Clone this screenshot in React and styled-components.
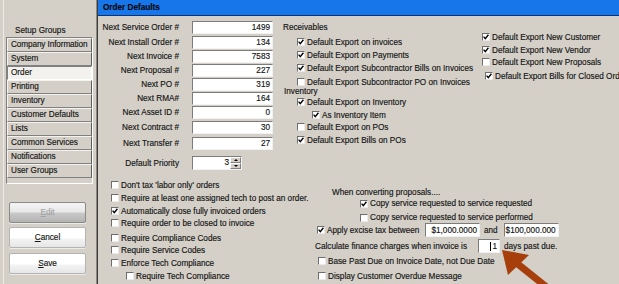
import React from "react";
import styled, { createGlobalStyle } from "styled-components";

const GlobalStyle = createGlobalStyle`
  html, body {
    margin: 0;
    padding: 0;
    background: #d4d0c8;
  }
  body {
    font-family: "Liberation Sans", Arial, sans-serif;
    font-size: 8.2px;
    color: #141414;
    -webkit-text-stroke: 0.15px #141414;
  }
`;

const Window = styled.div`
  position: relative;
  display: flex;
  width: 619px;
  height: 284px;
  overflow: hidden;
  background: #d4d0c8;
`;

/* ---------- left side ---------- */

const Sidebar = styled.aside`
  width: 94px;
  margin-left: 3px;
  flex-shrink: 0;
  display: flex;
  flex-direction: column;
  box-sizing: border-box;
  border-left: 1px solid #ecebe6;
  border-right: 1px solid #8c8880;
`;

const SidebarLabel = styled.div`
  margin-top: 26px;
  height: 10px;
  line-height: 10px;
  padding-left: 11px;
  white-space: nowrap;
`;

const GroupList = styled.div`
  width: 87px;
  margin: 1px 0 0 2px;
  box-sizing: border-box;
  padding-bottom: 5px;
  border: 1px solid;
  border-color: #808080 #fff #fff #808080;
`;

const GroupItem = styled.div`
  height: 14px;
  box-sizing: border-box;
  padding-left: 3px;
  line-height: 12px;
  white-space: nowrap;
  overflow: hidden;
  letter-spacing: ${(p) => (p.$tight ? "-0.1px" : "0")};
  background: ${(p) => (p.$selected ? "#f3f2ee" : "#d4d0c8")};
  border-top: 1px solid ${(p) => (p.$selected ? "#808080" : "#f4f3ef")};
  border-left: 1px solid ${(p) => (p.$selected ? "#808080" : "#f4f3ef")};
  border-bottom: 1px solid ${(p) => (p.$selected ? "#fff" : "#808080")};
  border-right: 1px solid ${(p) => (p.$selected ? "#fff" : "#5c5c5c")};
`;

const ActionButton = styled.button`
  width: 77px;
  height: 21px;
  margin: ${(p) => p.$mt}px 0 0 5px;
  padding: 0;
  font-family: "Liberation Sans", Arial, sans-serif;
  font-size: 8.2px;
  border-radius: 2px;
  border: 1px solid ${(p) => (p.disabled ? "#8a8a8a" : "#b4b4b4")};
  color: ${(p) => (p.disabled ? "#a4a4a4" : "#141414")};
  -webkit-text-stroke: 0.15px ${(p) => (p.disabled ? "#a4a4a4" : "#141414")};
  background: ${(p) =>
    p.disabled
      ? "linear-gradient(#f4f4f4 0%, #e8e8e8 45%, #c8c8c8 55%, #b4b4b4 100%)"
      : "linear-gradient(#ffffff 0%, #ffffff 50%, #f2f2f2 60%, #e6e6e6 100%)"};
  box-shadow: 0 1px 0 #ecebe6;
`;

/* ---------- main panel ---------- */

const Main = styled.section`
  flex: 1;
  min-width: 0;
  display: flex;
  flex-direction: column;
  border-left: 1px solid #3c3c3c;
`;

const TitleBar = styled.div`
  height: 15px;
  flex-shrink: 0;
  display: flex;
  align-items: center;
  padding-left: 5px;
  background: #1777ea;
  border-bottom: 1px solid #0c3474;
  font-weight: bold;
  color: #000;
  white-space: nowrap;
`;

const TopSection = styled.div`
  height: 163px;
  display: flex;
  flex-shrink: 0;
`;

const NumbersColumn = styled.div`
  width: 185px;
  flex-shrink: 0;
  display: flex;
  flex-direction: column;
`;

const FieldRow = styled.div`
  display: grid;
  grid-template-columns: 81px 81px;
  column-gap: 13px;
  align-items: center;
  height: ${(p) => p.$h || 13}px;
  margin-top: ${(p) => p.$mt}px;
`;

const FieldLabel = styled.span`
  text-align: right;
  white-space: nowrap;
`;

const TextBox = styled.div`
  width: ${(p) => (p.$w ? `${p.$w}px` : "100%")};
  height: ${(p) => p.$h || 13}px;
  box-sizing: border-box;
  flex-shrink: 0;
  display: flex;
  align-items: center;
  justify-content: flex-end;
  padding-right: 2px;
  background: #fff;
  border: 1px solid;
  border-color: #7c7c7c #f2f2f2 #f2f2f2 #7c7c7c;
  white-space: nowrap;
  overflow: hidden;
`;

const Caret = styled.span`
  width: 1px;
  height: 9px;
  background: #000;
  margin-right: 1px;
`;

const Spinner = styled.div`
  width: 50px;
  height: 14px;
  box-sizing: border-box;
  display: flex;
  background: #fff;
  border: 1px solid;
  border-color: #7c7c7c #f2f2f2 #f2f2f2 #7c7c7c;
`;

const SpinValue = styled.span`
  flex: 1;
  text-align: right;
  line-height: 12px;
  padding-right: 1px;
`;

const SpinButtons = styled.div`
  width: 11px;
  display: flex;
  flex-direction: column;
`;

const SpinButton = styled.span`
  flex: 1;
  display: flex;
  align-items: center;
  justify-content: center;
  background: #d4d0c8;
  border: 1px solid;
  border-color: #fff #808080 #808080 #fff;

  &::after {
    content: "";
    width: 0;
    height: 0;
    border-left: 2px solid transparent;
    border-right: 2px solid transparent;
    ${(p) =>
      p.$up ? "border-bottom: 2px solid #000;" : "border-top: 2px solid #000;"}
  }
`;

const OptionColumn = styled.div`
  width: ${(p) => (p.$w ? `${p.$w}px` : "auto")};
  flex-shrink: 0;
  display: flex;
  flex-direction: column;
`;

const SectionLabel = styled.div`
  height: ${(p) => p.$h || 10}px;
  line-height: ${(p) => p.$h || 10}px;
  margin-top: ${(p) => p.$mt || 0}px;
  padding-left: ${(p) => p.$indent || 0}px;
  white-space: nowrap;
`;

const Row = styled.div`
  display: flex;
  align-items: center;
  gap: 2px;
  height: ${(p) => p.$h || 10}px;
  margin-top: ${(p) => p.$mt || 0}px;
  padding-left: ${(p) => p.$indent || 0}px;
  white-space: nowrap;
`;

const Box = styled.span`
  width: 8px;
  height: 8px;
  box-sizing: border-box;
  flex-shrink: 0;
  display: flex;
  align-items: center;
  justify-content: center;
  background: #fff;
  border: 1px solid;
  border-color: #6e6e6e #eaeaea #eaeaea #6e6e6e;
`;

const FixedText = styled.span`
  width: ${(p) => p.$w}px;
  flex-shrink: 0;
`;

const Gap = styled.span`
  margin: 0 ${(p) => p.$r}px 0 ${(p) => p.$l}px;
`;

const BottomSection = styled.div`
  display: flex;
  flex: 1;
`;

const Overlay = styled.svg`
  position: absolute;
  left: 0;
  top: 0;
  pointer-events: none;
`;

function CheckBox({ checked }) {
  return (
    <Box>
      {checked && (
        <svg width="6" height="6" viewBox="0 0 6 6">
          <path d="M0.6 2.6 L2.3 4.6 L5.4 0.8" fill="none" stroke="#000" strokeWidth="1.4" />
        </svg>
      )}
    </Box>
  );
}

function Check({ label, checked, mt, indent, h }) {
  return (
    <Row $mt={mt} $indent={indent} $h={h}>
      <CheckBox checked={checked} />
      <span>{label}</span>
    </Row>
  );
}

const groups = [
  "Company Information",
  "System",
  "Order",
  "Printing",
  "Inventory",
  "Customer Defaults",
  "Lists",
  "Common Services",
  "Notifications",
  "User Groups",
];

const counters = [
  ["Next Service Order #", "1499", 5],
  ["Next Install Order #", "134", 2],
  ["Next Invoice #", "7583", 1],
  ["Next Proposal #", "227", 1],
  ["Next PO #", "319", 1],
  ["Next RMA#", "164", 1],
  ["Next Asset ID #", "0", 1],
  ["Next Contract #", "30", 2],
  ["Next Transfer #", "27", 3],
];

const orderRules = [
  ["Don't tax 'labor only' orders", false, 0, 13],
  ["Require at least one assigned tech to post an order.", false, 1, 13],
  ["Automatically close fully invoiced orders", true, 1, 13],
  ["Require order to be closed to invoice", false, 0, 13],
  ["Require Compliance Codes", false, 3, 13],
  ["Require Service Codes", false, 0, 13],
  ["Enforce Tech Compliance", false, 1, 13],
  ["Require Tech Compliance", false, 1, 28],
];

export default function App() {
  return (
    <Window>
      <GlobalStyle />
      <Sidebar>
        <SidebarLabel>Setup Groups</SidebarLabel>
        <GroupList>
          {groups.map((g) => (
            <GroupItem key={g} $selected={g === "Order"} $tight={g.length > 18}>
              {g}
            </GroupItem>
          ))}
        </GroupList>
        <ActionButton disabled $mt={18}>
          <u>E</u>dit
        </ActionButton>
        <ActionButton $mt={4}>
          <u>C</u>ancel
        </ActionButton>
        <ActionButton $mt={5}>
          <u>S</u>ave
        </ActionButton>
      </Sidebar>

      <Main>
        <TitleBar>Order Defaults</TitleBar>
        <TopSection>
          <NumbersColumn>
            {counters.map(([label, value, mt]) => (
              <FieldRow key={label} $mt={mt}>
                <FieldLabel>{label}</FieldLabel>
                <TextBox>{value}</TextBox>
              </FieldRow>
            ))}
            <FieldRow $mt={6} $h={14}>
              <FieldLabel>Default Priority</FieldLabel>
              <Spinner>
                <SpinValue>3</SpinValue>
                <SpinButtons>
                  <SpinButton $up />
                  <SpinButton />
                </SpinButtons>
              </Spinner>
            </FieldRow>
          </NumbersColumn>

          <OptionColumn $w={199}>
            <SectionLabel $mt={7}>Receivables</SectionLabel>
            <Check label="Default Export on invoices" checked mt={4} indent={14} />
            <Check label="Default Export on Payments" checked mt={3} indent={14} />
            <Check label="Default Export Subcontractor Bills on Invoices" checked mt={3} indent={14} />
            <Check label="Default Export Subcontractor PO on Invoices" mt={4} indent={14} />
            <SectionLabel $indent={1}>Inventory</SectionLabel>
            <Check label="Default Export on Inventory" checked indent={14} />
            <Check label="As Inventory Item" checked mt={3} indent={29} />
            <Check label="Default Export on POs" mt={2} indent={14} />
            <Check label="Default Export Bills on POs" checked mt={3} indent={14} />
          </OptionColumn>

          <OptionColumn>
            <Check label="Default Export New Customer" checked mt={16} />
            <Check label="Default Export New Vendor" checked mt={3} />
            <Check label="Default Export New Proposals" mt={2} />
            <Check label="Default Export Bills for Closed Orders" checked mt={4} indent={3} />
          </OptionColumn>
        </TopSection>

        <BottomSection>
          <OptionColumn $w={217}>
            {orderRules.map(([label, checked, mt, indent]) => (
              <Check key={label} label={label} checked={checked} mt={mt} indent={indent} h={12} />
            ))}
          </OptionColumn>

          <OptionColumn>
            <SectionLabel $mt={8} $h={11} $indent={17}>
              When converting proposals....
            </SectionLabel>
            <Check label="Copy service requested to service requested" checked indent={45} h={11} />
            <Check label="Copy service requested to service performed" mt={3} indent={45} h={11} />
            <Row $h={14} $indent={2}>
              <CheckBox checked />
              <FixedText $w={96}>Apply excise tax between</FixedText>
              <TextBox $w={55} $h={14}>$1,000.0000</TextBox>
              <Gap $l={2} $r={4}>and</Gap>
              <TextBox $w={55} $h={14}>$100,000.000</TextBox>
            </Row>
            <Row $h={14} $mt={2}>
              <FixedText $w={161}>Calculate finance charges when invoice is</FixedText>
              <TextBox $w={22} $h={14}>
                <Caret />1
              </TextBox>
              <Gap $l={2} $r={0}>days past due.</Gap>
            </Row>
            <Check label="Base Past Due on Invoice Date, not Due Date" mt={2} indent={3} h={12} />
            <Check label="Display Customer Overdue Message" mt={3} indent={3} h={12} />
          </OptionColumn>
        </BottomSection>
      </Main>

      <Overlay width="619" height="284" viewBox="0 0 619 284">
        <line x1="554" y1="293" x2="514" y2="261" stroke="#a63f0c" strokeWidth="7" />
        <polygon points="502,250 529,255 508,275" fill="#a63f0c" />
      </Overlay>
    </Window>
  );
}
